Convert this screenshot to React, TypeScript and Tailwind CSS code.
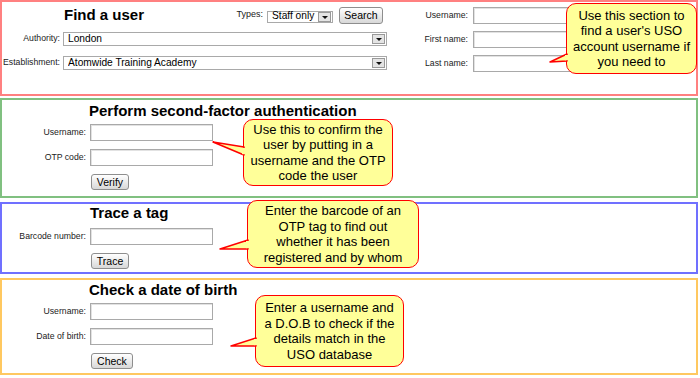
import React from "react";

const labelCls = "text-right text-[8.7px] text-[#222]";

function Field({ className = "" }: { className?: string }) {
  return (
    <input
      readOnly
      className={`h-[17px] border border-[#a9a9a9] bg-white shadow-[inset_1px_1px_0_#e2e2e2] outline-none ${className}`}
    />
  );
}

function Btn({ label, className = "" }: { label: string; className?: string }) {
  return (
    <button
      className={`flex h-[16px] items-center justify-center rounded-[3px] border border-[#8e8e8e] bg-linear-to-b from-white to-[#d8d8d8] text-[10.5px] leading-none text-black ${className}`}
    >
      {label}
    </button>
  );
}

function Select({ value, className = "" }: { value: string; className?: string }) {
  return (
    <div
      className={`flex items-center border border-[#a9a9a9] bg-white pl-[4px] pr-px text-[10.2px] text-black ${className}`}
    >
      <span className="flex-1 truncate leading-none">{value}</span>
      <span className="flex h-[10px] w-[13px] items-end justify-center border border-[#999] bg-[#e4e4e4] pb-[2px]">
        <svg width="6" height="3" viewBox="0 0 6 3">
          <path d="M0 0h6L3 3z" fill="#111" />
        </svg>
      </span>
    </div>
  );
}

function Row({ label, className = "" }: { label: string; className?: string }) {
  return (
    <div className={`flex items-center ${className}`}>
      <span className={`w-[84px] ${labelCls}`}>{label}</span>
      <Field className="ml-[4px] w-[123px]" />
    </div>
  );
}

const headCls = "text-[15px] font-bold leading-[18px] text-black";

const calloutCls =
  "absolute flex items-center justify-center rounded-[10px] border-[1.5px] border-[#f00] bg-[#ffff99] text-center text-[13px] leading-[15.5px] text-black";

function App() {
  return (
    <div className="relative h-[378px] w-[700px] overflow-hidden bg-white font-['Liberation_Sans',Arial,sans-serif]">
      <div className="flex w-[698px] flex-col">
        {/* Find a user */}
        <div className="flex h-[96px] border-2 border-[#ff8080]">
          <div className="flex w-[385px] flex-col pt-[3px]">
            <div className="flex h-[20px] items-center pr-[4px]">
              <h2 className={`ml-[62px] ${headCls}`}>Find a user</h2>
              <span className="ml-auto text-[9px] text-[#222]">Types:</span>
              <Select value="Staff only" className="ml-[4px] mt-[3px] h-[12px] w-[66px]" />
              <Btn label="Search" className="ml-[6px] h-[17px] w-[44px]" />
            </div>
            <div className="mt-[7px] flex items-center">
              <span className={`w-[58px] ${labelCls}`}>Authority:</span>
              <Select value="London" className="ml-[3px] h-[14px] w-[324px]" />
            </div>
            <div className="mt-[10px] flex items-center">
              <span className={`w-[58px] ${labelCls}`}>Establishment:</span>
              <Select value="Atomwide Training Academy" className="ml-[3px] h-[14px] w-[324px]" />
            </div>
          </div>
          <div className="flex flex-col gap-[7px] pt-[5px]">
            {["Username:", "First name:", "Last name:"].map((l) => (
              <div key={l} className="flex items-center">
                <span className={`w-[81px] ${labelCls}`}>{l}</span>
                <Field className="ml-[5px] w-[120px]" />
              </div>
            ))}
          </div>
        </div>

        {/* Second factor */}
        <div className="mt-[2px] flex h-[100px] flex-col border-2 border-[#80c080] pt-[2px]">
          <h2 className={`ml-[87px] ${headCls}`}>Perform second-factor authentication</h2>
          <Row label="Username:" className="mt-[4px]" />
          <Row label="OTP code:" className="mt-[8px]" />
          <Btn label="Verify" className="ml-[89px] mt-[8px] w-[38px]" />
        </div>

        {/* Trace a tag */}
        <div className="mt-[4px] flex h-[72px] flex-col border-2 border-[#7070ff]">
          <h2 className={`ml-[88px] ${headCls}`}>Trace a tag</h2>
          <Row label="Barcode number:" className="mt-[6px]" />
          <Btn label="Trace" className="ml-[89px] mt-[8px] w-[38px]" />
        </div>

        {/* Date of birth */}
        <div className="mt-[4px] flex h-[97px] flex-col border-2 border-[#ffc860] pt-px">
          <h2 className={`ml-[87px] ${headCls}`}>Check a date of birth</h2>
          <Row label="Username:" className="mt-[4px]" />
          <Row label="Date of birth:" className="mt-[8px]" />
          <Btn label="Check" className="ml-[89px] mt-[8px] w-[42px]" />
        </div>
      </div>

      {/* callouts */}
      <div className={`${calloutCls} left-[566px] top-[3px] h-[71px] w-[131px]`}>
        <p>
          Use this section to
          <br />
          find a user's USO
          <br />
          account username if
          <br />
          you need to
        </p>
      </div>
      <div className={`${calloutCls} left-[243px] top-[119px] h-[67px] w-[150px]`}>
        <p>
          Use this to confirm the
          <br />
          user by putting in a
          <br />
          username and the OTP
          <br />
          code the user
        </p>
      </div>
      <div className={`${calloutCls} left-[247px] top-[200px] h-[68px] w-[172px]`}>
        <p>
          Enter the barcode of an
          <br />
          OTP tag to find out
          <br />
          whether it has been
          <br />
          registered and by whom
        </p>
      </div>
      <div className={`${calloutCls} left-[255px] top-[295px] h-[72px] w-[149px]`}>
        <p>
          Enter a username and
          <br />
          a D.O.B to check if the
          <br />
          details match in the
          <br />
          USO database
        </p>
      </div>

      {/* callout tails */}
      <svg className="pointer-events-none absolute left-0 top-0" width="700" height="378">
        <g fill="#ffff99" stroke="#f00" strokeWidth="1.5" strokeLinejoin="round">
          <polygon points="550,62 567,54 567,61" />
          <polygon points="213,142 244,147 244,155" />
          <polygon points="220,249 248,240 248,249" />
          <polygon points="231,346 256,338 256,346" />
        </g>
        <g fill="#ffff99">
          <rect x="565" y="55" width="4" height="5.2" />
          <rect x="242" y="148" width="4" height="6.2" />
          <rect x="246" y="241" width="4" height="7.2" />
          <rect x="254" y="339" width="4" height="6.2" />
        </g>
      </svg>
    </div>
  );
}

export default App;
